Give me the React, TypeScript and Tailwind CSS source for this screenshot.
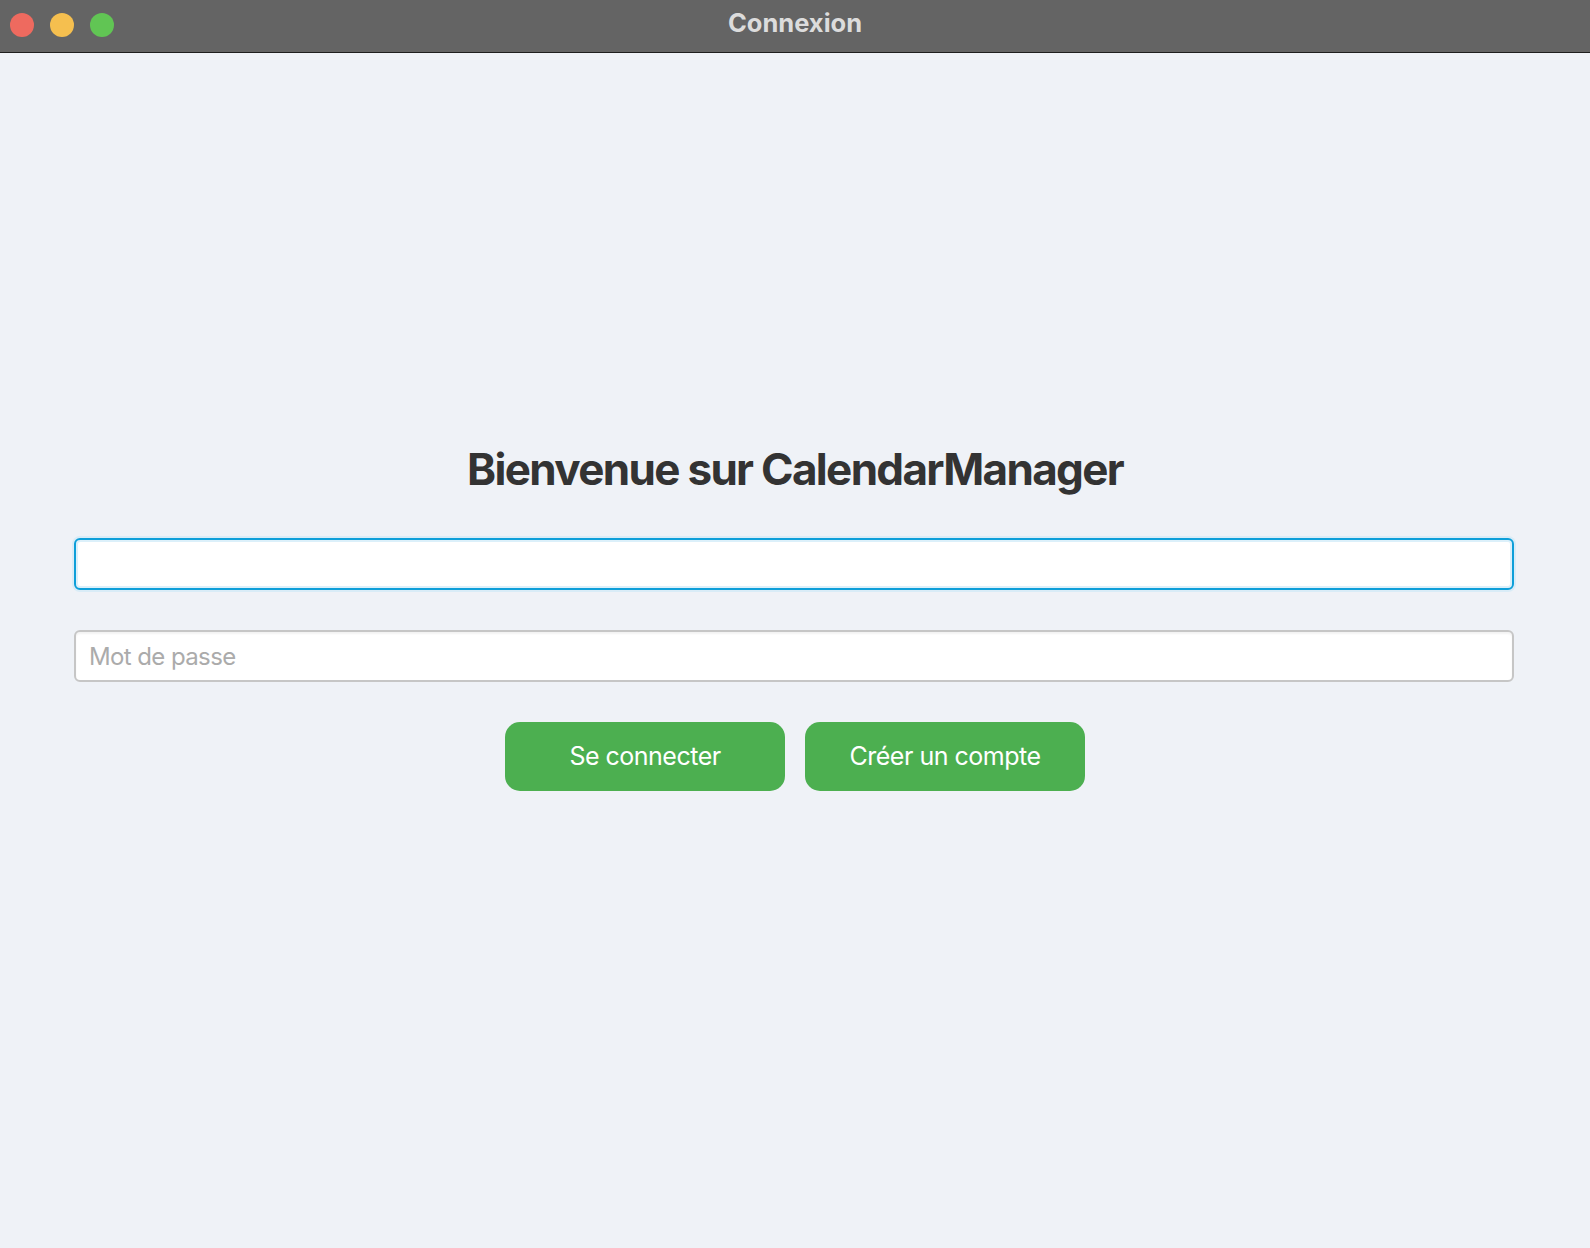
import React from "react";

export default function App() {
  return (
    <div
      className="w-[1590px] h-[1248px] bg-[#eff2f7] flex flex-col overflow-hidden"
      style={{ fontFamily: "Inter, 'Noto Sans', sans-serif" }}
    >
      <div className="h-[53px] bg-[#646464] border-b border-[#1e1e1e] flex items-center relative shrink-0">
        <div className="flex items-center gap-[16px] pl-[10px] pb-[2px]">
          <span className="w-[24px] h-[24px] rounded-full bg-[#ee6a5f]" />
          <span className="w-[24px] h-[24px] rounded-full bg-[#f5bf4f]" />
          <span className="w-[24px] h-[24px] rounded-full bg-[#61c554]" />
        </div>
        <div className="absolute inset-0 flex items-center justify-center pb-[6px]">
          <span className="text-[25.5px] font-bold text-[#dcdcdc] tracking-[0em]">Connexion</span>
        </div>
      </div>
      <div className="flex flex-col px-[74px] pt-[387px] w-full">
        <h1 className="text-center text-[44px] leading-[58px] font-bold text-[#333333] tracking-[-0.038em]">
          Bienvenue sur CalendarManager
        </h1>
        <input
          className="mt-[40px] h-[52px] w-[1440px] bg-white rounded-[6px] border-2 border-[#0e9fd9] shadow-[0_0_0_2px_#d9ecf7,inset_0_0_0_2px_#dcf0fa] outline-none px-[15px] text-[24px]"
        />
        <input
          placeholder="Mot de passe"
          className="mt-[40px] h-[52px] w-[1440px] bg-white rounded-[6px] border-2 border-[#c6c6c6] shadow-[inset_0_2px_2px_rgba(0,0,0,0.05)] outline-none pl-[13px] pr-[14px] text-[24px] tracking-[-0.025em] placeholder:text-[#ababab]"
        />
        <div className="mt-[40px] flex justify-center gap-[20px]">
          <button className="w-[280px] h-[69px] rounded-[15px] bg-[#4caf50] text-white text-[25px] tracking-[-0.02em]">
            Se connecter
          </button>
          <button className="w-[280px] h-[69px] rounded-[15px] bg-[#4caf50] text-white text-[25px] tracking-[-0.02em]">
            Créer un compte
          </button>
        </div>
      </div>
    </div>
  );
}
